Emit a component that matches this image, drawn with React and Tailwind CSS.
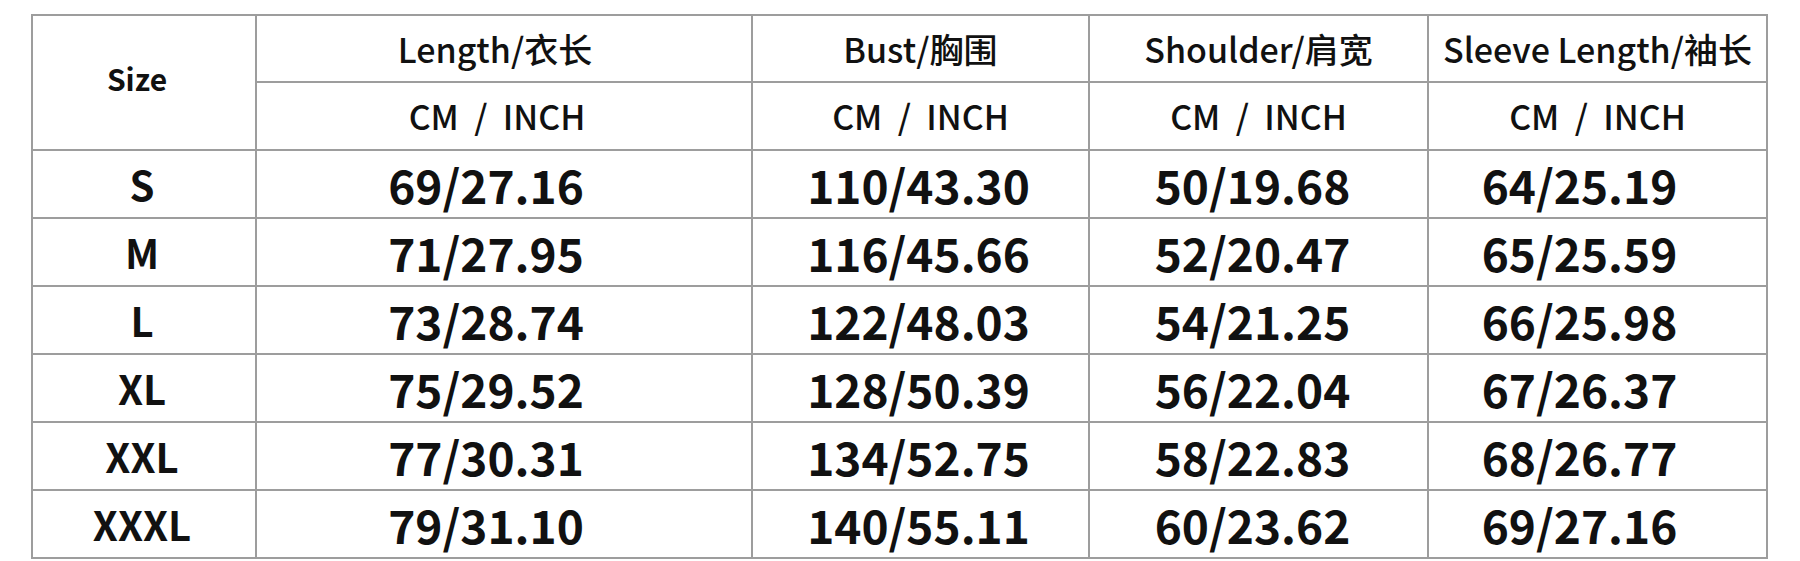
import React from 'react';

const rows = [
  ['S', '69/27.16', '110/43.30', '50/19.68', '64/25.19'],
  ['M', '71/27.95', '116/45.66', '52/20.47', '65/25.59'],
  ['L', '73/28.74', '122/48.03', '54/21.25', '66/25.98'],
  ['XL', '75/29.52', '128/50.39', '56/22.04', '67/26.37'],
  ['XXL', '77/30.31', '134/52.75', '58/22.83', '68/26.77'],
  ['XXXL', '79/31.10', '140/55.11', '60/23.62', '69/27.16'],
];

const headers = ['Length/衣长', 'Bust/胸围', 'Shoulder/肩宽', 'Sleeve Length/袖长'];

// data cells in the first and last measure columns sit a little left of centre
const shift = ['pr-[36px]', 'pr-[4px]', 'pr-[12px]', 'pr-[36px]'];

const cell = 'border-2 border-[#9d9d9d] text-center align-middle p-0 leading-none';

export default function App() {
  return (
    <div className="w-[1800px] h-[561px] bg-white pt-[14px] pl-[31px] font-['Noto_Sans_CJK_SC','Noto_Sans',sans-serif] text-[#111]">
      <table className="border-collapse table-fixed w-[1737px]">
        <colgroup>
          <col className="w-[224px]" />
          <col className="w-[496px]" />
          <col className="w-[337px]" />
          <col className="w-[339px]" />
          <col className="w-[339px]" />
        </colgroup>
        <thead>
          <tr>
            <th rowSpan={2} className={`${cell} text-[30px] font-bold pr-[14px]`}>
              <span className="relative -top-[5px]">Size</span>
            </th>
            {headers.map((h, i) => (
              <th key={h} className={`${cell} h-[67px] text-[34px] font-medium ${i === 0 ? 'pr-[18px]' : ''}`}>
                {h}
              </th>
            ))}
          </tr>
          <tr>
            {headers.map((h, i) => (
              <th key={h} className={`${cell} h-[68px] text-[34px] font-medium whitespace-pre ${i === 0 ? 'pr-[14px]' : ''}`}>
                CM  /  INCH
              </th>
            ))}
          </tr>
        </thead>
        <tbody>
          {rows.map((r) => (
            <tr key={r[0]}>
              <td className={`${cell} h-[68px] text-[40px] font-semibold pr-[4px]`}>{r[0]}</td>
              {r.slice(1).map((v, i) => (
                <td key={i} className={`${cell} text-[46px] font-bold ${shift[i]}`}>
                  {v}
                </td>
              ))}
            </tr>
          ))}
        </tbody>
      </table>
    </div>
  );
}
